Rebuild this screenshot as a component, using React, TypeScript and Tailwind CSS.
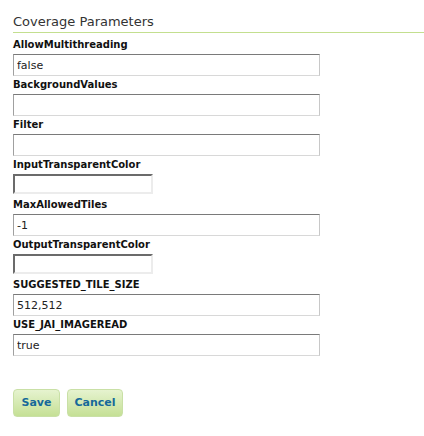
const params: { name: string; value: string; small?: boolean }[] = [
  { name: "AllowMultithreading", value: "false" },
  { name: "BackgroundValues", value: "" },
  { name: "Filter", value: "" },
  { name: "InputTransparentColor", value: "", small: true },
  { name: "MaxAllowedTiles", value: "-1" },
  { name: "OutputTransparentColor", value: "", small: true },
  { name: "SUGGESTED_TILE_SIZE", value: "512,512" },
  { name: "USE_JAI_IMAGEREAD", value: "true" },
];

export default function App() {
  return (
    <div className="w-[424px] h-[436px] bg-white pl-[13px] font-['DejaVu_Sans',Verdana,sans-serif] text-[#222]">
      <div className="mt-[12px] h-[21px] leading-[20px] text-[13px] text-[#333] border-b border-[#c3df8f]">
        Coverage Parameters
      </div>
      <div className="mt-[3px] flex flex-col">
        {params.map((p) => (
          <div key={p.name} className="h-[40px] flex flex-col">
            <label className="h-[18px] leading-[18px] text-[10px] font-bold text-[#111]">{p.name}</label>
            {p.small ? (
              <input
                readOnly
                value={p.value}
                className="w-[140px] h-[20px] border-2 border-t-[#6b6b6b] border-l-[#6b6b6b] border-r-[#ececec] border-b-[#ececec] bg-white outline-none"
              />
            ) : (
              <input
                readOnly
                value={p.value}
                className="w-[307px] h-[22px] px-[3px] text-[11px] text-[#222] border border-t-[#7a7a7a] border-l-[#a0a0a0] border-r-[#c8c8c8] border-b-[#d8d8d8] bg-white outline-none font-['DejaVu_Sans',Verdana,sans-serif]"
              />
            )}
          </div>
        ))}
      </div>
      <div className="mt-[33px] flex gap-[7px]">
        <button className="w-[47px] h-[28px] rounded-[4px] border border-[#c9e0a6] bg-gradient-to-b from-[#e6f3cf] to-[#c5e095] text-[11px] font-bold text-[#16699a]">
          Save
        </button>
        <button className="w-[56px] h-[28px] rounded-[4px] border border-[#c9e0a6] bg-gradient-to-b from-[#e6f3cf] to-[#c5e095] text-[11px] font-bold text-[#16699a]">
          Cancel
        </button>
      </div>
    </div>
  );
}
